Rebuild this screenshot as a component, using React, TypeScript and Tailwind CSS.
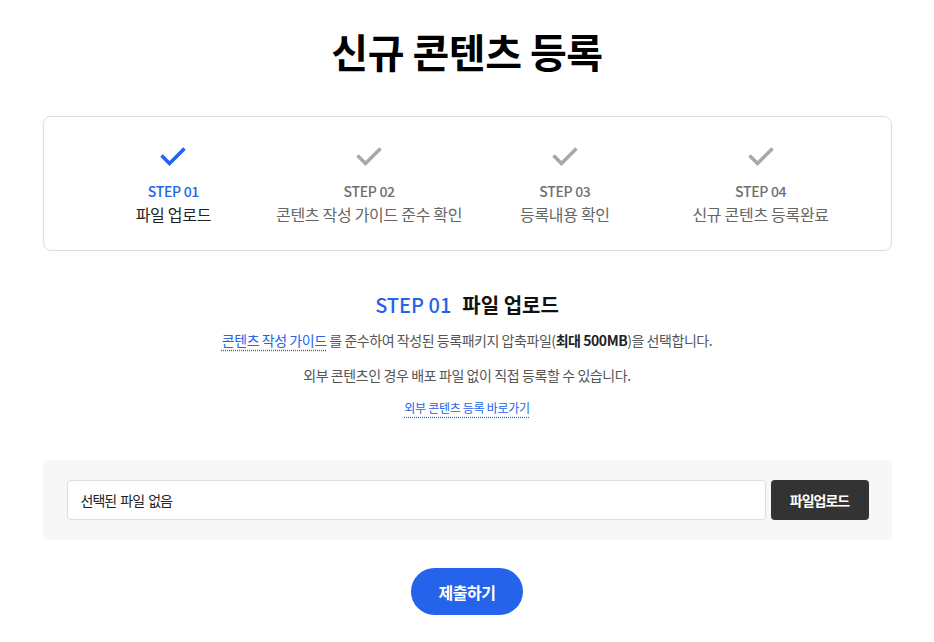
import React from "react";

const font = { fontFamily: '"Noto Sans CJK KR", "Noto Sans", sans-serif' };

function Check({ active }: { active: boolean }) {
  return (
    <svg width="28" height="24" viewBox="0 0 28 24" fill="none">
      <path
        d="M2.5 11.5 L10.5 19.5 L25.5 4.5"
        stroke={active ? "#2563eb" : "#a8a8a8"}
        strokeWidth="3.6"
        strokeLinecap="butt"
        strokeLinejoin="miter"
      />
    </svg>
  );
}

const steps = [
  { n: "STEP 01", label: "파일 업로드" },
  { n: "STEP 02", label: "콘텐츠 작성 가이드 준수 확인" },
  { n: "STEP 03", label: "등록내용 확인" },
  { n: "STEP 04", label: "신규 콘텐츠 등록완료" },
];

export default function App() {
  return (
    <div className="min-h-[642px] w-full bg-white" style={font}>
      <div className="mx-auto w-[849px] pt-[24px]">
        <h1 className="text-center text-[40px] font-bold leading-[55px] tracking-[-0.5px] text-black">
          신규 콘텐츠 등록
        </h1>

        <div className="mt-[37px] grid grid-cols-4 rounded-[8px] border border-[#dddddd] px-8 pt-[27px] pb-[25px]">
          {steps.map((s, i) => (
            <div key={s.n} className="flex flex-col items-center">
              <div className="flex h-[24px] items-center justify-center">
                <Check active={i === 0} />
              </div>
              <div
                className={`mt-[13px] text-[14px] font-medium leading-[20px] tracking-[-0.3px] ${
                  i === 0 ? "text-[#2563eb]" : "text-[#6f6f6f]"
                }`}
              >
                {s.n}
              </div>
              <div
                className={`mt-[2px] text-[16px] leading-[22px] tracking-[-0.3px] ${
                  i === 0 ? "text-[#222222]" : "text-[#666666]"
                }`}
              >
                {s.label}
              </div>
            </div>
          ))}
        </div>

        <div className="mt-[40px] flex flex-col items-center">
          <h2 className="text-[20px] font-bold leading-[28px]">
            <span className="font-medium text-[#2563eb]">STEP 01</span>
            <span className="ml-[11px] text-[#111111]">파일 업로드</span>
          </h2>
          <p className="mt-[11px] text-[14px] leading-[20px] tracking-[-0.45px] text-[#555555]">
            <a className="text-[#2563eb] underline decoration-dotted decoration-[#2563eb] underline-offset-[4px]">
              콘텐츠 작성 가이드
            </a>{" "}
            를 준수하여 작성된 등록패키지 압축파일(
            <b className="font-bold text-[#222222]">최대 500MB</b>)을 선택합니다.
          </p>
          <p className="mt-[15px] text-[14px] leading-[20px] tracking-[-0.4px] text-[#555555]">
            외부 콘텐츠인 경우 배포 파일 없이 직접 등록할 수 있습니다.
          </p>
          <a className="mt-[13px] text-[12px] leading-[20px] tracking-[-0.3px] text-[#2563eb] underline decoration-dotted decoration-[#2563eb] underline-offset-[4px]">
            외부 콘텐츠 등록 바로가기
          </a>
        </div>

        <div className="mt-[42px] flex items-center gap-[5px] rounded-[8px] bg-[#f7f7f7] py-[20px] pl-[24px] pr-[23px]">
          <div className="flex h-[40px] flex-1 items-center rounded-[4px] border border-[#dddddd] bg-white px-[13px] text-[14px] tracking-[-1px] [word-spacing:2px] text-[#222222]">
            선택된 파일 없음
          </div>
          <button className="h-[40px] w-[98px] rounded-[4px] bg-[#333333] text-[14px] font-bold tracking-[-1px] text-white">
            파일업로드
          </button>
        </div>

        <div className="mt-[28px] flex justify-center">
          <button className="h-[47px] w-[112px] rounded-full bg-[#2563eb] text-[16px] font-bold tracking-[-0.5px] text-white">
            제출하기
          </button>
        </div>
      </div>
    </div>
  );
}
